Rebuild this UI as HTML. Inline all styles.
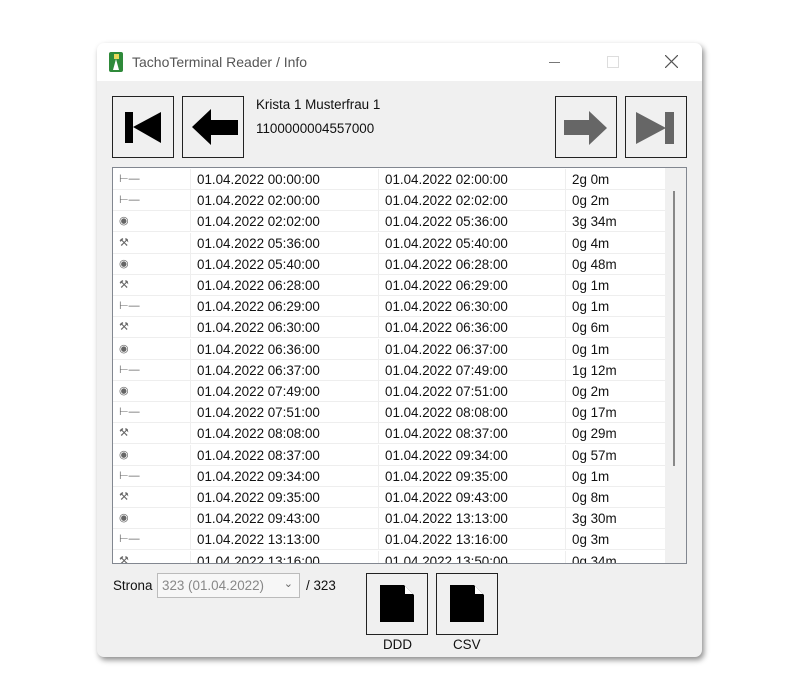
<!DOCTYPE html>
<html><head><meta charset="utf-8"><style>
body{margin:0;width:800px;height:700px;background:#fff;position:relative;font-family:"Liberation Sans",sans-serif;overflow:hidden}
.win{position:absolute;left:97px;top:43px;width:605px;height:614px;background:#f0f0f0;border-radius:7px;box-shadow:2px 3px 6px rgba(0,0,0,.45);overflow:hidden}
.title{position:absolute;left:0;top:0;width:605px;height:38px;background:#fff}
.t{position:absolute;font-size:14px;color:#555;left:35px;top:11px}
.btn{position:absolute;width:62px;height:62px;border:1px solid #222;box-sizing:border-box;top:53px}
.list{position:absolute;left:15px;top:124px;width:575px;height:397px;background:#fff;border:1px solid #828790;box-sizing:border-box;overflow:hidden}
.row{position:absolute;left:0;height:21px;width:553px;font-size:13.4px;color:#111}
.row span{position:absolute;top:3px}
.row i{position:absolute;bottom:0;height:1px;background:#eee}
.ic{left:6px;color:#666;font-size:11px;font-style:normal}
.sb{position:absolute;right:0;top:0;width:21px;height:100%;background:#f0f0f0}
</style></head><body>
<div class="win">
 <div class="title">
  <svg style="position:absolute;left:12px;top:9px" width="14" height="20"><rect x="0" y="0" width="14" height="20" rx="2" fill="#2f8a3a"/><rect x="5" y="2" width="5" height="5" fill="#e8d85a"/><path d="M4 18 L7 7 L10 18Z" fill="#fff"/></svg>
  <div class="t">TachoTerminal Reader / Info</div>
  <div style="position:absolute;left:452px;top:19px;width:11px;height:1px;background:#777"></div>
  <div style="position:absolute;left:510px;top:13px;width:10px;height:10px;border:1px solid #ddd"></div>
  <svg style="position:absolute;left:568px;top:12px" width="13" height="13"><path d="M0 0L13 13M13 0L0 13" stroke="#555" stroke-width="1.2"/></svg>
 </div>
 <div class="btn" style="left:15px"><svg width="60" height="60"><rect x="12" y="15" width="8" height="31"/><path d="M20 30L48 15V46Z"/></svg></div>
 <div class="btn" style="left:85px"><svg width="60" height="60"><path d="M9 30L28 12V23H55V38H28V48Z"/></svg></div>
 <div style="position:absolute;left:159px;top:54px;font-size:13.4px;color:#111">Krista 1 Musterfrau 1</div>
 <div style="position:absolute;left:159px;top:78px;font-size:13.4px;color:#111">1100000004557000</div>
 <div class="btn" style="left:458px"><svg width="60" height="60"><path d="M8 23H33V14L51 31L33 48V38H8Z" fill="#666"/></svg></div>
 <div class="btn" style="left:528px"><svg width="60" height="60"><path d="M10 15L40 31L10 47Z" fill="#666"/><rect x="39" y="15" width="9" height="32" fill="#666"/></svg></div>
 <div class="list" id="L"><div class="sb"><div style="position:absolute;left:8px;top:23px;width:2px;height:275px;background:#888"></div></div></div>
 <div style="position:absolute;left:16px;top:535px;font-size:13.4px;color:#111">Strona</div>
 <div style="position:absolute;left:60px;top:530px;width:143px;height:25px;border:1px solid #bbb;background:#f7f7f7;box-sizing:border-box;font-size:13.4px;color:#888;padding:4px 4px">323 (01.04.2022)<span style="position:absolute;right:6px;top:3px;color:#666;font-size:11px">&#8964;</span></div>
 <div style="position:absolute;left:209px;top:535px;font-size:13.4px;color:#111">/ 323</div>
 <div class="btn" style="left:269px;top:530px"><svg width="60" height="60"><path d="M13 11H37L47 21V48H13Z"/><path d="M38 12L46 20H38Z" fill="#fff"/></svg></div>
 <div class="btn" style="left:339px;top:530px"><svg width="60" height="60"><path d="M13 11H37L47 21V48H13Z"/><path d="M38 12L46 20H38Z" fill="#fff"/></svg></div>
 <div style="position:absolute;left:286px;top:594px;font-size:13.4px;color:#111">DDD</div>
 <div style="position:absolute;left:356px;top:594px;font-size:13.4px;color:#111">CSV</div>
</div>
<script>
var d=[["r","00:00:00","02:00:00","2g 0m"],["r","02:00:00","02:02:00","0g 2m"],["c","02:02:00","05:36:00","3g 34m"],["w","05:36:00","05:40:00","0g 4m"],["c","05:40:00","06:28:00","0g 48m"],["w","06:28:00","06:29:00","0g 1m"],["r","06:29:00","06:30:00","0g 1m"],["w","06:30:00","06:36:00","0g 6m"],["c","06:36:00","06:37:00","0g 1m"],["r","06:37:00","07:49:00","1g 12m"],["c","07:49:00","07:51:00","0g 2m"],["r","07:51:00","08:08:00","0g 17m"],["w","08:08:00","08:37:00","0g 29m"],["c","08:37:00","09:34:00","0g 57m"],["r","09:34:00","09:35:00","0g 1m"],["w","09:35:00","09:43:00","0g 8m"],["c","09:43:00","13:13:00","3g 30m"],["r","13:13:00","13:16:00","0g 3m"],["w","13:16:00","13:50:00","0g 34m"]];
var g={r:"&#8866;&#8212;",c:"&#9673;",w:"&#9874;"};var h="";
d.forEach(function(r,i){var y=1+i*21.2;h+='<div class="row" style="top:'+y+'px"><span class="ic">'+g[r[0]]+'</span><span style="left:84px">01.04.2022 '+r[1]+'</span><span style="left:272px">01.04.2022 '+r[2]+'</span><span style="left:459px">'+r[3]+'</span><i style="left:0;width:553px"></i><i style="left:77px;width:1px;height:21px;background:#eee"></i><i style="left:265px;width:1px;height:21px;background:#eee"></i><i style="left:452px;width:1px;height:21px;background:#eee"></i></div>';});
var L=document.getElementById("L");L.insertAdjacentHTML("afterbegin",h);
</script>
</body></html>
